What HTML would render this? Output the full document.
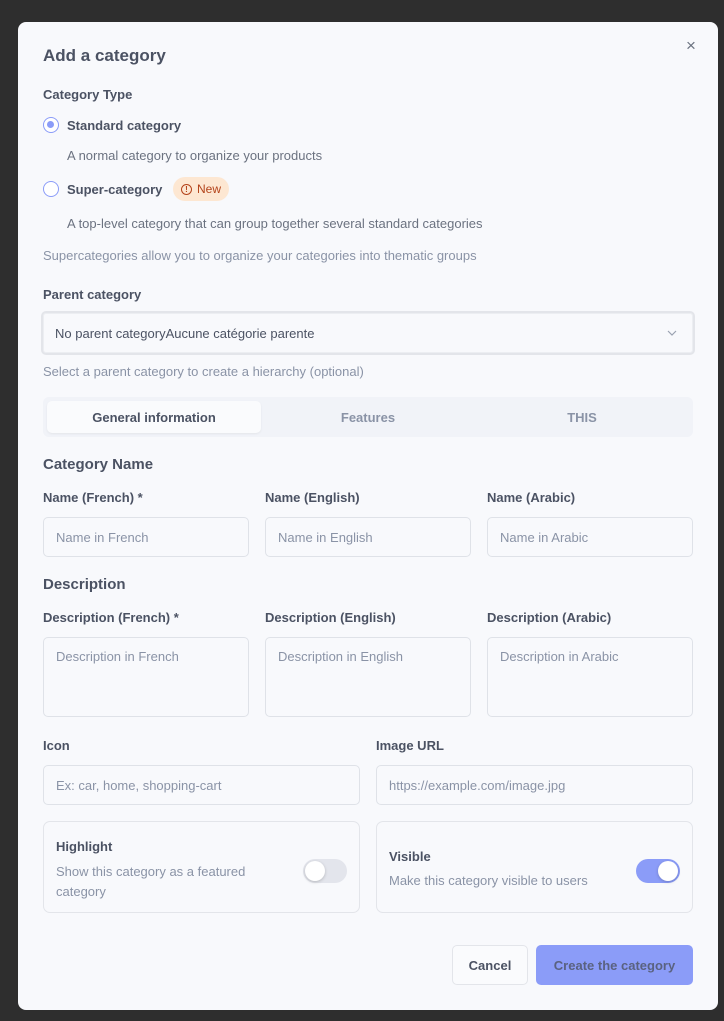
<!DOCTYPE html>
<html><head><meta charset="utf-8"><style>
*{box-sizing:border-box;margin:0;padding:0}
body{width:724px;height:1021px;background:#2e2e2e;font-family:"Liberation Sans",sans-serif;position:relative;overflow:hidden;color:#4b5263}
.m{position:absolute;left:18px;top:22px;width:700px;height:988px;background:#f8f9fc;border-radius:8px}
.a{position:absolute;white-space:nowrap}
.lbl{font-size:13px;font-weight:bold;color:#4b5263}
.desc{font-size:13px;color:#6b7280}
.hint{font-size:13px;color:#8a93a6}
.in{position:absolute;border:1px solid #dfe2e8;border-radius:5px;background:#f8f9fc;font-size:13px;color:#8a93a6;padding:0 12px;display:flex;align-items:center}
.ta{align-items:flex-start;padding-top:11px}
.radio{position:absolute;width:16px;height:16px;border-radius:50%;border:1.5px solid #8b9cf8;background:#fff}
</style></head><body>
<div class="m"></div>
<div class="a" style="left:43px;top:46px;font-size:17px;font-weight:bold;color:#4b5263">Add a category</div>
<div class="a" style="left:686px;top:36px;font-size:17px;color:#6b7280">×</div>
<div class="a lbl" style="left:43px;top:87px">Category Type</div>
<div class="radio" style="left:43px;top:117px"><div style="position:absolute;left:3px;top:3px;width:7px;height:7px;border-radius:50%;background:#8b9cf8"></div></div>
<div class="a lbl" style="left:67px;top:118px">Standard category</div>
<div class="a desc" style="left:67px;top:148px">A normal category to organize your products</div>
<div class="radio" style="left:43px;top:181px"></div>
<div class="a lbl" style="left:67px;top:182px">Super-category</div>
<div class="a" style="left:173px;top:177px;width:56px;height:24px;border-radius:12px;background:#fde7d2;color:#b4431a;font-size:12px;display:flex;align-items:center;padding-left:8px"><span style="display:inline-block;width:11px;height:11px;border:1.3px solid #b4431a;border-radius:50%;font-size:8px;line-height:9px;text-align:center;margin-right:5px;font-weight:bold">!</span>New</div>
<div class="a desc" style="left:67px;top:216px">A top-level category that can group together several standard categories</div>
<div class="a hint" style="left:43px;top:248px">Supercategories allow you to organize your categories into thematic groups</div>
<div class="a lbl" style="left:43px;top:287px">Parent category</div>
<div class="in" style="left:41px;top:311px;width:654px;height:44px;border:2px solid #e3e5ea;box-shadow:inset 0 0 0 1px #eceef2;color:#4b5263">No parent categoryAucune catégorie parente
<svg style="position:absolute;right:16px;top:16px" width="10" height="8" viewBox="0 0 10 8"><path d="M1 2l4 4 4-4" fill="none" stroke="#9aa2b1" stroke-width="1.2"/></svg></div>
<div class="a hint" style="left:43px;top:364px">Select a parent category to create a hierarchy (optional)</div>
<div class="a" style="left:43px;top:397px;width:650px;height:40px;background:#f1f3f8;border-radius:6px"></div>
<div class="a" style="left:47px;top:401px;width:214px;height:32px;background:#fafbfd;border-radius:5px;box-shadow:0 1px 2px rgba(0,0,0,.06);font-size:13px;font-weight:bold;color:#4b5263;display:flex;align-items:center;justify-content:center">General information</div>
<div class="a" style="left:261px;top:401px;width:214px;height:32px;font-size:13px;font-weight:bold;color:#8a93a6;display:flex;align-items:center;justify-content:center">Features</div>
<div class="a" style="left:475px;top:401px;width:214px;height:32px;font-size:13px;font-weight:bold;color:#8a93a6;display:flex;align-items:center;justify-content:center">THIS</div>
<div class="a" style="left:43px;top:456px;font-size:15px;font-weight:bold;color:#4b5263">Category Name</div>
<div class="a lbl" style="left:43px;top:490px">Name (French) *</div>
<div class="a lbl" style="left:265px;top:490px">Name (English)</div>
<div class="a lbl" style="left:487px;top:490px">Name (Arabic)</div>
<div class="in" style="left:43px;top:517px;width:206px;height:40px">Name in French</div>
<div class="in" style="left:265px;top:517px;width:206px;height:40px">Name in English</div>
<div class="in" style="left:487px;top:517px;width:206px;height:40px">Name in Arabic</div>
<div class="a" style="left:43px;top:576px;font-size:15px;font-weight:bold;color:#4b5263">Description</div>
<div class="a lbl" style="left:43px;top:610px">Description (French) *</div>
<div class="a lbl" style="left:265px;top:610px">Description (English)</div>
<div class="a lbl" style="left:487px;top:610px">Description (Arabic)</div>
<div class="in ta" style="left:43px;top:637px;width:206px;height:80px">Description in French</div>
<div class="in ta" style="left:265px;top:637px;width:206px;height:80px">Description in English</div>
<div class="in ta" style="left:487px;top:637px;width:206px;height:80px">Description in Arabic</div>
<div class="a lbl" style="left:43px;top:738px">Icon</div>
<div class="a lbl" style="left:376px;top:738px">Image URL</div>
<div class="in" style="left:43px;top:765px;width:317px;height:40px">Ex: car, home, shopping-cart</div>
<div class="in" style="left:376px;top:765px;width:317px;height:40px">https://example.com/image.jpg</div>
<div class="a" style="left:43px;top:821px;width:317px;height:92px;border:1px solid #e3e5ea;border-radius:7px"></div>
<div class="a lbl" style="left:56px;top:839px">Highlight</div>
<div class="a desc" style="left:56px;top:862px;color:#8a93a6;line-height:20px;white-space:normal;width:220px">Show this category as a featured category</div>
<div class="a" style="left:303px;top:859px;width:44px;height:24px;border-radius:12px;background:#e3e5ec"><div style="position:absolute;left:2px;top:2px;width:20px;height:20px;border-radius:50%;background:#fff;box-shadow:0 1px 3px rgba(0,0,0,.2)"></div></div>
<div class="a" style="left:376px;top:821px;width:317px;height:92px;border:1px solid #e3e5ea;border-radius:7px"></div>
<div class="a lbl" style="left:389px;top:849px">Visible</div>
<div class="a desc" style="left:389px;top:873px;color:#8a93a6">Make this category visible to users</div>
<div class="a" style="left:636px;top:859px;width:44px;height:24px;border-radius:12px;background:#8b9cf8"><div style="position:absolute;left:22px;top:2px;width:20px;height:20px;border-radius:50%;background:#fff;box-shadow:0 1px 3px rgba(0,0,0,.2)"></div></div>
<div class="a" style="left:452px;top:945px;width:76px;height:40px;border:1px solid #e3e5ea;border-radius:5px;background:#fafbfd;font-size:13px;font-weight:bold;color:#4b5263;display:flex;align-items:center;justify-content:center">Cancel</div>
<div class="a" style="left:536px;top:945px;width:157px;height:40px;border-radius:5px;background:#8b9cf8;font-size:13px;font-weight:bold;color:#5a6280;display:flex;align-items:center;justify-content:center">Create the category</div>
</body></html>
